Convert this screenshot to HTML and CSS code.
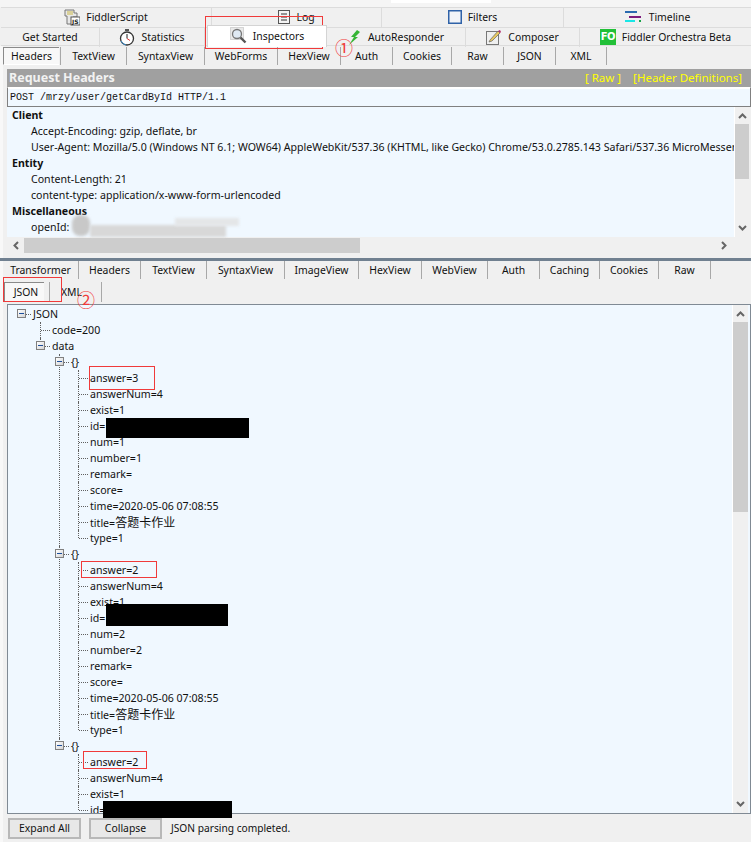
FILE: index.html
```html
<!DOCTYPE html>
<html lang="en">
<head>
<meta charset="utf-8">
<title>Fiddler Inspectors</title>
<link rel="stylesheet" href="styles.css">
</head>
<body>
<div class="app">
  <div class="strip"><span class="strip-white"></span></div>

  <div class="tabs tabs-1">
    <div class="tab"><svg class="ico" width="16" height="17" viewBox="0 0 16 17"><path d="M1 1h9v3h3v4H9v7H3V7H1z" fill="#e8e8e8" stroke="#777"/><path d="M3 3h6M3 5h6" stroke="#c9b84a"/><rect x="7" y="8" width="9" height="8" fill="#fff" stroke="#555"/><text x="8" y="15" class="ico-js">JS</text></svg>FiddlerScript</div>
    <div class="tab"><svg class="ico" width="12" height="14" viewBox="0 0 12 14"><rect x=".5" y=".5" width="11" height="13" fill="#f4f4f4" stroke="#555"/><path d="M3 4h6M3 7h6M3 10h6" stroke="#333"/></svg>Log</div>
    <div class="tab"><svg class="ico" width="14" height="14" viewBox="0 0 14 14"><rect x=".75" y=".75" width="12.5" height="12.5" fill="#f2f4f8" stroke="#2f62a8" stroke-width="1.5"/></svg>Filters</div>
    <div class="tab"><svg class="ico" width="18" height="12" viewBox="0 0 18 12"><rect x="0" y="0" width="12" height="2" fill="#2a6ab0"/><rect x="4" y="5" width="12" height="2" fill="#7d1a7d"/><rect x="0" y="9" width="10" height="2" fill="#19e6e6"/><rect x="14" y="9" width="2" height="2" fill="#1aa34a"/></svg>Timeline</div>
  </div>

  <div class="tabs tabs-2">
    <div class="tab">Get Started</div>
    <div class="tab"><svg class="ico" width="16" height="17" viewBox="0 0 16 17"><rect x="6" y="0" width="4" height="2" fill="#555"/><circle cx="8" cy="9.500" r="6.500" fill="#fff" stroke="#333" stroke-width="1.300"/><path d="M8 9.500V5" stroke="#222"/><path d="M8 9.500l3 2" stroke="#d33"/><path d="M2 12a7 7 0 0 0 5 4" stroke="#3a8fd0" fill="none"/></svg>Statistics</div>
    <div class="tab tab-on"><svg class="ico" width="17" height="17" viewBox="0 0 17 17"><rect x="0.500" y="0.500" width="13" height="12" fill="#e9e9e9" stroke="#b5b5b5" stroke-dasharray="1 1"/><circle cx="7" cy="7" r="4.500" fill="#dfe9f3" stroke="#777" stroke-width="1.300"/><path d="M10.500 10.500l5 5" stroke="#555" stroke-width="2.400"/></svg>Inspectors</div>
    <div class="tab"><svg class="ico" width="14" height="15" viewBox="0 0 14 15"><path d="M9 0L3 7h3L1 15l9-8H7l5-5z" fill="#35b535"/></svg>AutoResponder</div>
    <div class="tab"><svg class="ico" width="16" height="16" viewBox="0 0 16 16"><rect x=".5" y="2.500" width="12" height="13" fill="#efefef" stroke="#777"/><path d="M4 11l8-9 2 2-8 8-3 1z" fill="#e8c860" stroke="#666" stroke-width=".7"/><path d="M12 2l2-1 1 2-1 1z" fill="#b02a6b"/></svg>Composer</div>
    <div class="tab"><span class="fo">FO</span>Fiddler Orchestra Beta</div>
  </div>

  <section class="pane pane-req">
    <div class="sub sub-req">
      <div class="sub-tab sub-on">Headers</div>
      <div class="sub-tab">TextView</div>
      <div class="sub-tab">SyntaxView</div>
      <div class="sub-tab">WebForms</div>
      <div class="sub-tab">HexView</div>
      <div class="sub-tab">Auth</div>
      <div class="sub-tab">Cookies</div>
      <div class="sub-tab">Raw</div>
      <div class="sub-tab">JSON</div>
      <div class="sub-tab">XML</div>
    </div>

    <div class="titlebar">
      <span class="title">Request Headers</span>
      <span class="title-links"><span>[ Raw ]</span><span>[Header Definitions]</span></span>
    </div>
    <div class="reqline">POST /mrzy/user/getCardById HTTP/1.1</div>

    <div class="hdr-wrap">
      <div class="hdr-body">
        <div class="hdr-group">Client</div>
        <div class="hdr-item">Accept-Encoding: gzip, deflate, br</div>
        <div class="hdr-item">User-Agent: Mozilla/5.0 (Windows NT 6.1; WOW64) AppleWebKit/537.36 (KHTML, like Gecko) Chrome/53.0.2785.143 Safari/537.36 MicroMessenger/7.0.9</div>
        <div class="hdr-group">Entity</div>
        <div class="hdr-item">Content-Length: 21</div>
        <div class="hdr-item">content-type: application/x-www-form-urlencoded</div>
        <div class="hdr-group">Miscellaneous</div>
        <div class="hdr-item">openId:</div>
      </div>
      <div class="vbar vbar-req">
        <svg class="chev" width="9" height="6" viewBox="0 0 9 6"><path d="M1 5l3.500-3.500L8 5" fill="none" stroke="#666" stroke-width="2"/></svg>
        <div class="thumb thumb-req"></div>
        <svg class="chev chev-end" width="9" height="6" viewBox="0 0 9 6"><path d="M1 1l3.500 3.500L8 1" fill="none" stroke="#666" stroke-width="2"/></svg>
      </div>
    </div>

    <div class="hbar">
      <svg class="chev-h" width="6" height="9" viewBox="0 0 6 9"><path d="M5 1L1.500 4.500 5 8" fill="none" stroke="#666" stroke-width="2"/></svg>
      <div class="hthumb"></div>
      <svg class="chev-h chev-r" width="6" height="9" viewBox="0 0 6 9"><path d="M1 1l3.500 3.500L1 8" fill="none" stroke="#666" stroke-width="2"/></svg>
    </div>
  </section>

  <div class="splitter"></div>

  <section class="pane pane-res">
    <div class="sub sub-res">
      <div class="sub-tab">Transformer</div>
      <div class="sub-tab">Headers</div>
      <div class="sub-tab">TextView</div>
      <div class="sub-tab">SyntaxView</div>
      <div class="sub-tab">ImageView</div>
      <div class="sub-tab">HexView</div>
      <div class="sub-tab">WebView</div>
      <div class="sub-tab">Auth</div>
      <div class="sub-tab">Caching</div>
      <div class="sub-tab">Cookies</div>
      <div class="sub-tab">Raw</div>
    </div>
    <div class="sub sub-res2">
      <div class="sub-tab sub-on">JSON</div>
      <div class="sub-tab sub-left">XML</div>
    </div>

    <div class="tree-panel">
      <div class="tree-scroll">
        <ul class="tree tree-root">
          <li><span class="exp"></span><span class="lbl">JSON</span>
            <ul class="tree">
              <li><span class="lbl">code=200</span></li>
              <li><span class="exp"></span><span class="lbl">data</span>
                <ul class="tree">
                  <li><span class="exp"></span><span class="lbl">{}</span>
                    <ul class="tree">
                      <li><span class="lbl">answer=3</span></li>
                      <li><span class="lbl">answerNum=4</span></li>
                      <li><span class="lbl">exist=1</span></li>
                      <li><span class="lbl">id=</span></li>
                      <li><span class="lbl">num=1</span></li>
                      <li><span class="lbl">number=1</span></li>
                      <li><span class="lbl">remark=</span></li>
                      <li><span class="lbl">score=</span></li>
                      <li><span class="lbl">time=2020-05-06 07:08:55</span></li>
                      <li><span class="lbl">title=<span class="cjk">答题卡作业</span></span></li>
                      <li><span class="lbl">type=1</span></li>
                    </ul>
                  </li>
                  <li><span class="exp"></span><span class="lbl">{}</span>
                    <ul class="tree">
                      <li><span class="lbl">answer=2</span></li>
                      <li><span class="lbl">answerNum=4</span></li>
                      <li><span class="lbl">exist=1</span></li>
                      <li><span class="lbl">id=</span></li>
                      <li><span class="lbl">num=2</span></li>
                      <li><span class="lbl">number=2</span></li>
                      <li><span class="lbl">remark=</span></li>
                      <li><span class="lbl">score=</span></li>
                      <li><span class="lbl">time=2020-05-06 07:08:55</span></li>
                      <li><span class="lbl">title=<span class="cjk">答题卡作业</span></span></li>
                      <li><span class="lbl">type=1</span></li>
                    </ul>
                  </li>
                  <li><span class="exp"></span><span class="lbl">{}</span>
                    <ul class="tree">
                      <li><span class="lbl">answer=2</span></li>
                      <li><span class="lbl">answerNum=4</span></li>
                      <li><span class="lbl">exist=1</span></li>
                      <li><span class="lbl">id=</span></li>
                    </ul>
                  </li>
                </ul>
              </li>
            </ul>
          </li>
        </ul>
      </div>
      <div class="vbar vbar-res">
        <svg class="chev" width="9" height="6" viewBox="0 0 9 6"><path d="M1 5l3.500-3.500L8 5" fill="none" stroke="#666" stroke-width="2"/></svg>
        <div class="thumb thumb-res"></div>
        <svg class="chev chev-end" width="9" height="6" viewBox="0 0 9 6"><path d="M1 1l3.500 3.500L8 1" fill="none" stroke="#666" stroke-width="2"/></svg>
      </div>
    </div>

    <div class="actions">
      <button class="btn">Expand All</button>
      <button class="btn">Collapse</button>
      <span class="status">JSON parsing completed.</span>
    </div>
  </section>

  <div class="smudge s1"></div>
  <div class="smudge s2"></div>
  <div class="smudge s3"></div>

  <div class="mask m1"></div>
  <div class="mask m2"></div>
  <div class="mask m3"></div>

  <div class="mark k1"></div>
  <div class="mark k2"></div>
  <div class="mark k3"></div>
  <div class="mark k4"></div>
  <div class="mark k5"></div>
  <span class="circled c1">①</span>
  <span class="circled c2">②</span>
</div>
</body>
</html>
```
FILE: styles.css
```css
* { box-sizing: border-box; }
html, body { margin: 0; padding: 0; }
body {
  width: 751px;
  height: 842px;
  overflow: hidden;
  background: #f0f0f0;
  color: #111;
  font: 10.6px/16px "Noto Sans", sans-serif;
}
.app { position: relative; width: 751px; height: 842px; overflow: hidden; }

/* top strip */
.strip { height: 7px; background: #f5f5f5; padding-left: 391px; }
.strip-white { display: block; width: 100px; height: 3px; background: #fff; }

/* main tabs */
.tabs { display: grid; background: #f0f0f0; font-size: 10.4px; }
.tabs-1 {
  height: 20px;
  margin-left: 1px;
  grid-template-columns: 211px 170px 182px 187px;
  border-top: 1px solid #dcdcdc;
}
.tabs-2 {
  height: 19px;
  margin-left: 1px;
  grid-template-columns: 99px 105px 122px 139px 114px 171px;
  border-top: 1px solid #dcdcdc;
  border-bottom: 1px solid #dcdcdc;
}
.tab {
  display: flex;
  align-items: center;
  justify-content: center;
  gap: 6px;
  padding-bottom: 1px;
  border-right: 1px solid #dcdcdc;
  white-space: nowrap;
}
.tab:last-child { border-right: 0; }
.tab-on {
  position: relative;
  z-index: 1;
  height: 22px;
  margin-top: -3px;
  margin-left: 2px;
  padding-bottom: 2px;
  background: #fff;
  border: 1px solid #d4d4d4;
  border-bottom: 0;
}
.ico { flex: none; }
.ico-js { font: bold 6px "DejaVu Sans", sans-serif; fill: #222; }
.fo {
  flex: none;
  width: 16px;
  height: 16px;
  background: #22c038;
  color: #fff;
  font: bold 10px/16px "DejaVu Sans", sans-serif;
  text-align: center;
  letter-spacing: -.5px;
}

/* panes */
.pane { border-left: 3px solid #f8f8f8; padding-left: 4px; }
.pane-req { height: 212px; }
.pane-res { height: 581px; }

.sub { display: grid; margin-left: -4px; align-items: stretch; font-size: 10.4px; }
.sub-req {
  height: 19px;
  padding-top: 1px;
  grid-template-columns: 58px 66px 78px 73px 63px 52px 59px 52px 52px 51px;
  margin-bottom: 4px;
}
.sub-res {
  height: 18px;
  grid-template-columns: 76px 62px 66px 78px 74px 63px 66px 52px 60px 59px 52px;
}
.sub-res2 {
  height: 20px;
  margin-top: 3px;
  margin-bottom: 2px;
  grid-template-columns: 47px 52px;
}
.sub-tab {
  display: flex;
  align-items: center;
  justify-content: center;
  border-right: 1px solid #a8a8a8;
  white-space: nowrap;
}
.sub-left { justify-content: flex-start; padding-left: 11px; }
.sub-on { position: relative; isolation: isolate; }
.sub-on::before {
  content: "";
  position: absolute;
  z-index: -1;
  left: 0;
  top: 0;
  right: 1px;
  bottom: 0;
  background: #f8f8f8;
  border-top: 1px solid #8a8a8a;
  border-left: 1px solid #8a8a8a;
  border-bottom: 1px solid #fff;
}
.sub-res2 .sub-on::before { right: 5px; left: 1px; }

/* request */
.titlebar {
  height: 18px;
  background: #a0a0a0;
  display: flex;
  align-items: center;
  justify-content: space-between;
  padding: 0 9px 0 2px;
}
.title { color: #f2f2f2; font: bold 12.500px/18px "Noto Sans", sans-serif; }
.title-links { display: flex; gap: 12px; color: #ffff00; font-size: 11.500px; }
.reqline {
  height: 20px;
  background: #f0f8ff;
  border: 1px solid #808080;
  border-top-color: #fff;
  box-shadow: inset 0 1px 0 #fff;
  font: 10px/19px "Liberation Mono", monospace;
  padding-left: 2px;
  white-space: nowrap;
}
.hdr-wrap { display: flex; height: 130px; }
.hdr-body {
  width: 727px;
  background: #f0f8ff;
  overflow: hidden;
  white-space: nowrap;
}
.hdr-group { height: 16px; padding-left: 5px; font-weight: bold; }
.hdr-item { height: 16px; padding-left: 24px; }

.vbar { display: flex; flex-direction: column; align-items: center; background: #f0f0f0; }
.vbar-req { width: 15px; border-left: 1px solid #fff; }
.vbar-res { width: 16px; height: 100%; border-left: 1px solid #fff; flex: none; }
.chev { flex: none; margin-top: 6px; }
.chev-end { margin-top: auto; margin-bottom: 6px; }
.thumb { flex: none; width: 100%; background: #cdcdcd; }
.thumb-req { height: 55px; margin-top: 5px; }
.thumb-res { height: 190px; margin-top: 5px; }

.hbar {
  display: flex;
  align-items: center;
  height: 16px;
  padding-left: 6px;
}
.hthumb { width: 336px; height: 15px; background: #cdcdcd; margin-left: 5px; }
.chev-r { margin-left: auto; margin-right: 24px; }

.splitter { height: 3px; background: #708090; }

/* response */
.tree-panel {
  display: flex;
  height: 510px;
  background: #f0f8ff;
  border: 1px solid #808a94;
  padding-right: 2px;
}
.tree-scroll { flex: 1; overflow: hidden; padding-top: 1px; }
.tree { list-style: none; margin: 0; padding: 0; }
.tree-root { margin-left: 13px; }
.tree .tree { margin-left: 19px; }
.tree li { position: relative; }
.tree li::before {
  content: "";
  position: absolute;
  left: 0;
  top: 0;
  bottom: 0;
  border-left: 1px dotted #606060;
}
.tree li:last-child::before { bottom: auto; height: 8px; }
.tree-root > li::before { display: none; }
.lbl { display: block; height: 16px; line-height: 16px; padding-left: 12px; white-space: nowrap; position: relative; }
.lbl::before {
  content: "";
  position: absolute;
  left: 1px;
  top: 8px;
  width: 9px;
  border-top: 1px dotted #606060;
}
.cjk { font: 12px/16px "Noto Sans CJK SC", sans-serif; }
.exp {
  position: absolute;
  z-index: 1;
  left: -4px;
  top: 3px;
  width: 9px;
  height: 9px;
  background: linear-gradient(135deg, #fff, #d4d4d4);
  border: 1px solid #808080;
}
.exp::after {
  content: "";
  position: absolute;
  left: 1px;
  top: 3px;
  width: 5px;
  height: 1px;
  background: #1d4f9c;
}

.actions { display: flex; align-items: center; height: 27px; padding: 2px 0 0 1px; }
.btn {
  width: 73px;
  height: 21px;
  margin-right: 8px;
  padding: 0 0 2px;
  background: #e8e8e8;
  border: 2px solid #b8b8b8;
  border-radius: 0;
  color: #111;
  font: 10.4px "Noto Sans", sans-serif;
}
.status { margin-left: 1px; padding-bottom: 2px; font-size: 10.2px; }

/* overlays */
.smudge { position: absolute; filter: blur(1.500px); }
.s1 { left: 72px; top: 215px; width: 18px; height: 21px; background: #c8c8c8; border-radius: 8px; }
.s2 { left: 90px; top: 225px; width: 136px; height: 12px; background: #d8d8d8; }
.s3 { left: 175px; top: 218px; width: 64px; height: 8px; background: #e4e6e8; }

.mask { position: absolute; background: #000; }
.m1 { left: 106px; top: 418px; width: 143px; height: 20px; }
.m2 { left: 106px; top: 604px; width: 122px; height: 22px; }
.m3 { left: 103px; top: 801px; width: 129px; height: 17px; }

.mark { position: absolute; border: 1px solid #f03a3a; }
.k1 { left: 205px; top: 16px; width: 118px; height: 33px; }
.k2 { left: 3px; top: 277px; width: 59px; height: 25px; }
.k3 { left: 89px; top: 366px; width: 66px; height: 24px; }
.k4 { left: 81px; top: 561px; width: 76px; height: 17px; }
.k5 { left: 83px; top: 751px; width: 64px; height: 18px; }

.circled { position: absolute; color: #f03a3a; font: 18px/18px "Noto Sans CJK SC", sans-serif; }
.c1 { left: 335px; top: 38px; }
.c2 { left: 77px; top: 290px; }
```
